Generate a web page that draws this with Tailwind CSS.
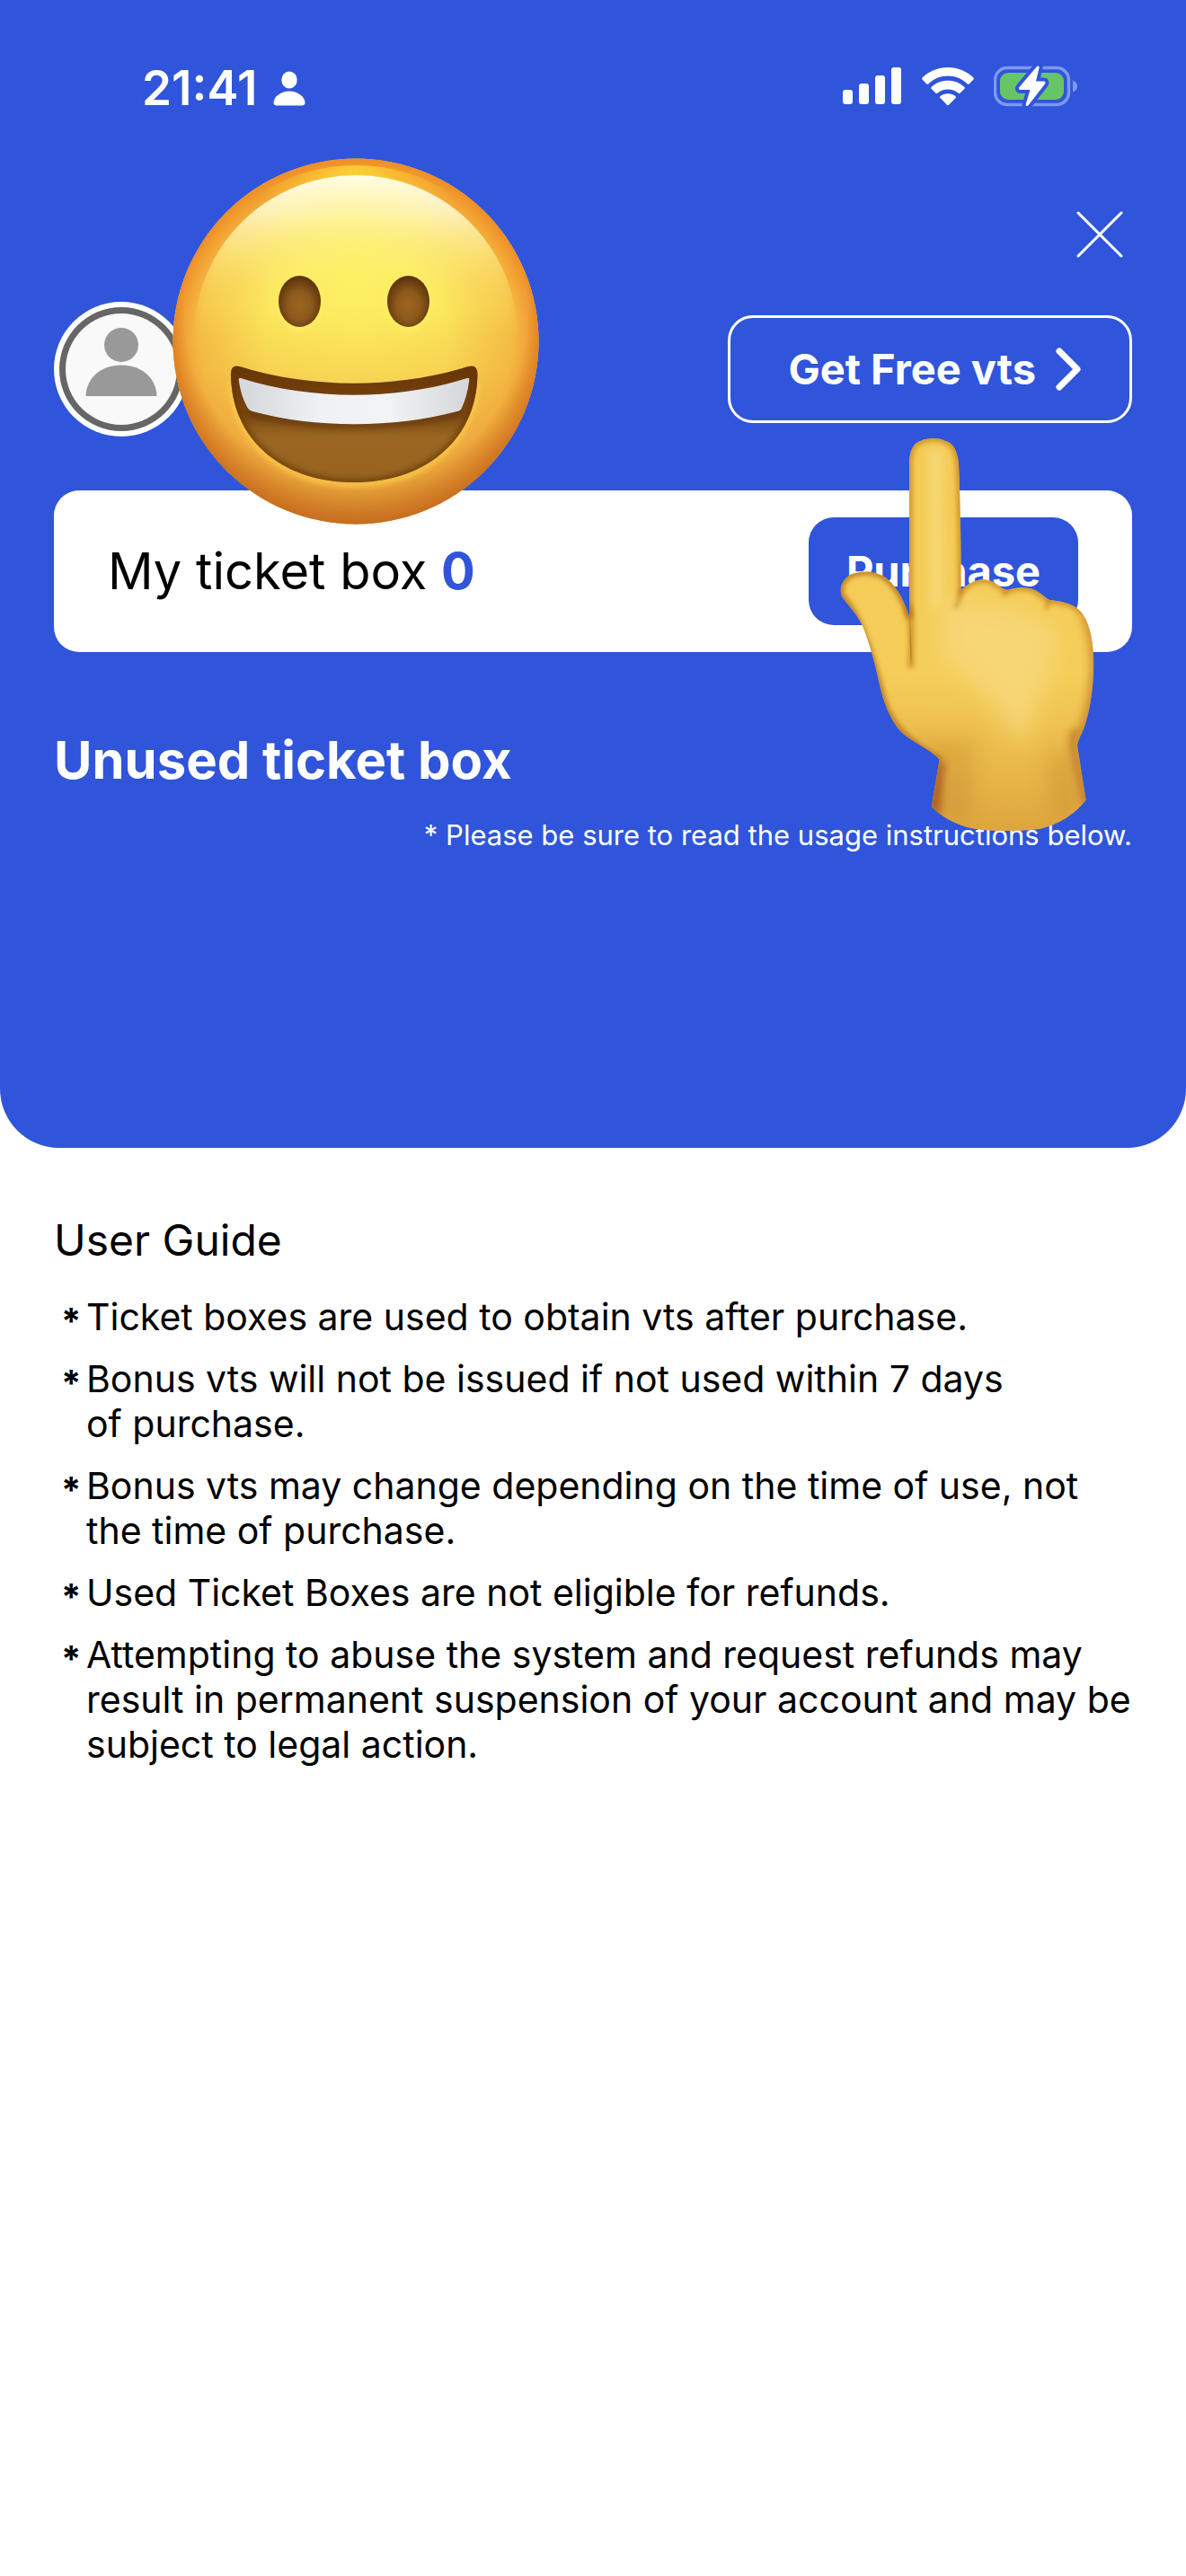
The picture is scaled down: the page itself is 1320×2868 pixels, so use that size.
<!DOCTYPE html>
<html lang="en">
<head>
  <meta charset="UTF-8" />
  <meta name="viewport" content="width=device-width, initial-scale=1" />
  <title>Ticket box</title>
  <script src="https://cdn.jsdelivr.net/npm/@tailwindcss/browser@4"></script>
</head>
<body class="bg-white text-black font-['Inter','Liberation_Sans',sans-serif] min-h-screen">

  <header class="relative bg-[#3055da] text-white rounded-b-[66px] pb-[330px]">

    <!-- Status bar -->
    <div class="flex items-center justify-between h-[192px] pl-[158px] pr-[120px]">
      <div class="flex items-center gap-[18px] pt-1">
        <span class="text-[53px] leading-[60px] font-semibold">21:41</span>
        <svg class="w-9 h-[39px]" viewBox="0 0 36 39" fill="currentColor" aria-hidden="true">
          <ellipse cx="18" cy="10" rx="8.7" ry="9.5" />
          <path d="M18 22.500C27 22.500 35.500 28.500 35.500 35.500C35.500 37.500 34 38.500 32 38.500H4C2 38.500 .5 37.500 .5 35.500C.5 28.500 9 22.500 18 22.500Z" />
        </svg>
      </div>
      <div class="flex items-center gap-[22px]">
        <svg class="w-[66px] h-[42px]" viewBox="0 0 66 42" fill="currentColor" aria-hidden="true">
          <rect x="0" y="25" width="11" height="16" rx="3" />
          <rect x="18" y="18" width="11" height="23" rx="3" />
          <rect x="36" y="9" width="11" height="32" rx="3" />
          <rect x="54" y="0" width="11" height="41" rx="3" />
        </svg>
        <svg class="w-[58px] h-[43px]" viewBox="0 0 58 43" fill="currentColor" aria-hidden="true">
          <path d="M29 0C40 0 50 4.300 57.200 11.300C58.100 12.200 58.100 13 57.300 13.800L52.800 18.200C52.100 18.900 51.300 18.900 50.500 18.200C44.700 12.700 37.200 9.600 29 9.600S13.300 12.700 7.500 18.200C6.700 18.900 5.900 18.900 5.200 18.200L.7 13.800C-.1 13-.1 12.200.8 11.300C8 4.300 18 0 29 0Z" />
          <path d="M29 14.800C36 14.800 42.400 17.400 47.200 21.800C48 22.600 48 23.400 47.300 24.100L42.700 28.500C42 29.200 41.200 29.200 40.400 28.500C37.300 25.900 33.300 24.400 29 24.400S20.700 25.900 17.600 28.500C16.800 29.200 16 29.200 15.300 28.500L10.700 24.100C10 23.400 10 22.600 10.800 21.800C15.600 17.400 22 14.800 29 14.800Z" />
          <path d="M29 29.300C32.200 29.300 35 30.300 37.300 32.100C38.100 32.800 38.100 33.600 37.400 34.300L30.300 41.500C29.400 42.400 28.600 42.400 27.700 41.500L20.600 34.300C19.900 33.600 19.900 32.800 20.700 32.100C23 30.300 25.800 29.300 29 29.300Z" />
        </svg>
        <svg class="w-[94px] h-[46px]" viewBox="0 0 94 46" aria-hidden="true">
          <rect x="1.500" y="2.500" width="82" height="41" rx="13.500" fill="none" stroke="#7f98f0" stroke-width="3.500" />
          <path d="M88 16.500C91 17.500 93 20 93 23S91 28.500 88 29.500Z" fill="#7f98f0" />
          <rect x="7" y="8" width="71" height="30" rx="9" fill="#68c566" />
          <path d="M48 1C49.500-.2 51 .8 50.500 2.700L47 17.500H55.500C57.500 17.500 58 19 57 20.500L38.500 44.200C37 45.700 35.200 44.500 35.800 42.700L40.500 27H30C28 27 27.500 25.500 28.500 24Z" fill="#fff" stroke="#3055da" stroke-width="8" stroke-linejoin="round" paint-order="stroke" />
        </svg>
      </div>
    </div>

    <div class="px-[60px]">
      <!-- Close -->
      <div class="flex justify-end">
        <button type="button" aria-label="Close" class="w-[72px] h-[138px] flex items-center justify-center">
          <svg class="w-[52px] h-[52px]" viewBox="0 0 52 52" fill="none" stroke="currentColor" stroke-width="3" stroke-linecap="round" aria-hidden="true">
            <path d="M2 2L50 50M50 2L2 50" />
          </svg>
        </button>
      </div>

      <!-- Profile and free vts -->
      <div class="relative flex items-center justify-between pt-[6px]">
        <svg class="w-[150px] h-[150px]" viewBox="0 0 150 150" role="img" aria-label="Profile">
          <circle cx="75" cy="75" r="75" fill="#fff" />
          <circle cx="75" cy="75" r="69" fill="#666" />
          <circle cx="75" cy="75" r="62" fill="#f9f9f9" />
          <circle cx="75" cy="48" r="19" fill="#999" />
          <path d="M35.500 105C36 85 52 70.500 75 70.500S114 85 114.500 105Z" fill="#999" />
        </svg>
        <button type="button" class="w-[450px] h-[120px] flex items-center justify-end gap-[22px] pr-[54px] border-3 border-white rounded-[28px] text-[47px] leading-[60px] font-bold whitespace-nowrap">
          Get Free vts
          <svg class="w-[28px] h-[50px]" viewBox="0 0 28 50" fill="none" stroke="currentColor" stroke-width="7" stroke-linecap="round" stroke-linejoin="round" aria-hidden="true">
            <path d="M4 5L24 25L4 45" />
          </svg>
        </button>

        <!-- Grinning face sticker -->
        <svg class="absolute left-[132px] top-[-154px] w-[408px] h-[408px] z-10" viewBox="0 0 408 408" role="img" aria-label="Grinning face">
          <defs>
            <linearGradient id="face-base" x1="0" y1="0" x2="0" y2="1">
              <stop offset="0" stop-color="#fcc12f" />
              <stop offset=".08" stop-color="#fbd040" />
              <stop offset=".4" stop-color="#fae45a" />
              <stop offset=".58" stop-color="#f7d452" />
              <stop offset=".8" stop-color="#efb545" />
              <stop offset="1" stop-color="#e0a03a" />
            </linearGradient>
            <radialGradient id="face-edge">
              <stop offset=".5" stop-color="#f19a30" stop-opacity="0" />
              <stop offset=".85" stop-color="#f09c34" stop-opacity=".5" />
              <stop offset="1" stop-color="#ee8a26" stop-opacity=".95" />
            </radialGradient>
            <radialGradient id="face-shade" gradientUnits="userSpaceOnUse" cx="204" cy="170" r="245">
              <stop offset=".78" stop-color="#b2601c" stop-opacity="0" />
              <stop offset="1" stop-color="#b2601c" stop-opacity=".8" />
            </radialGradient>
            <radialGradient id="face-top" gradientUnits="userSpaceOnUse" cx="204" cy="14" r="110">
              <stop offset="0" stop-color="#ffd535" stop-opacity=".85" />
              <stop offset="1" stop-color="#ffd535" stop-opacity="0" />
            </radialGradient>
            <linearGradient id="face-shine" gradientUnits="userSpaceOnUse" x1="0" y1="19" x2="0" y2="200">
              <stop offset="0" stop-color="#fffdea" />
              <stop offset=".22" stop-color="#fffbd0" stop-opacity=".85" />
              <stop offset=".5" stop-color="#fff994" stop-opacity=".55" />
              <stop offset=".75" stop-color="#fff478" stop-opacity=".22" />
              <stop offset="1" stop-color="#fff45c" stop-opacity="0" />
            </linearGradient>
            <radialGradient id="face-glow" gradientUnits="userSpaceOnUse" cx="204" cy="140" r="130">
              <stop offset="0" stop-color="#fff566" stop-opacity=".6" />
              <stop offset="1" stop-color="#fff566" stop-opacity="0" />
            </radialGradient>
            <radialGradient id="face-eye" cx=".5" cy=".58" r=".55">
              <stop offset="0" stop-color="#9a6520" />
              <stop offset=".5" stop-color="#8d5a1c" />
              <stop offset="1" stop-color="#5f340c" />
            </radialGradient>
            <linearGradient id="face-mouth" x1="0" y1="0" x2="0" y2="1">
              <stop offset="0" stop-color="#673405" />
              <stop offset=".4" stop-color="#7a4812" />
              <stop offset=".62" stop-color="#9a6722" />
              <stop offset="1" stop-color="#976421" />
            </linearGradient>
            <linearGradient id="face-teeth" x1="0" y1="0" x2="1" y2="0">
              <stop offset="0" stop-color="#d3d6da" />
              <stop offset=".35" stop-color="#eff1f4" />
              <stop offset=".65" stop-color="#f2f3f5" />
              <stop offset="1" stop-color="#d5d6d8" />
            </linearGradient>
            <clipPath id="mouth-clip">
              <path d="M75 232C155 257 249 257 329 232Q340 229 339.500 242C338 313 283 361 202 361S66 313 65 242Q64 229 75 232Z" />
            </clipPath>
            <filter id="soft" filterUnits="userSpaceOnUse" x="0" y="0" width="408" height="408"><feGaussianBlur stdDeviation="3" /></filter>
          </defs>
          <circle cx="204" cy="204" r="203.500" fill="url(#face-base)" />
          <circle cx="204" cy="204" r="203.500" fill="url(#face-edge)" />
          <circle cx="204" cy="204" r="203.500" fill="url(#face-shade)" />
          <circle cx="204" cy="204" r="196" fill="url(#face-top)" />
          <circle cx="204" cy="199" r="180" fill="url(#face-shine)" />
          <circle cx="204" cy="140" r="130" fill="url(#face-glow)" />
          <!-- eyes -->
          <g fill="#fff26a" opacity=".8" filter="url(#soft)">
            <ellipse cx="141.500" cy="163" rx="24" ry="29" />
            <ellipse cx="262.500" cy="163" rx="24" ry="29" />
          </g>
          <ellipse cx="141.500" cy="159.500" rx="23.500" ry="28.500" fill="url(#face-eye)" />
          <ellipse cx="262.500" cy="159.500" rx="23.500" ry="28.500" fill="url(#face-eye)" />
          <!-- mouth -->
          <path d="M66 250C69 315 123 363 202 363S335 315 338 250" fill="none" stroke="#fcd04e" stroke-width="5" filter="url(#soft)" />
          <path d="M75 232C155 257 249 257 329 232Q340 229 339.500 242C338 313 283 361 202 361S66 313 65 242Q64 229 75 232Z" fill="url(#face-mouth)" />
          <g clip-path="url(#mouth-clip)">
            <path d="M65 242C66 313 121 361 202 361S338 313 339.500 242" fill="none" stroke="#653506" stroke-width="7" opacity=".75" filter="url(#soft)" />
            <path d="M84 284C155 302 250 302 320 284" fill="none" stroke="#5b3007" stroke-width="6" opacity=".7" filter="url(#soft)" />
          </g>
          <path d="M76 245C155 270 249 270 328 245Q331 244 330 249Q328 265 322 278Q321 281 317 282C245 301 159 301 89 282Q85 281 83 277Q76 264 74 249Q73 244 76 245Z" fill="url(#face-teeth)" />
        </svg>
      </div>

      <!-- Ticket box card -->
      <div class="relative mt-[60px] h-[180px] flex items-center justify-between px-[60px] bg-white rounded-[28px]">
        <p class="text-[56px] leading-[72px] text-black">My ticket box <span class="font-bold text-[#3055da]">0</span></p>
        <button type="button" class="w-[300px] h-[120px] bg-[#3055da] rounded-[28px] text-[47px] leading-[60px] font-bold text-white">Purchase</button>

        <!-- Pointing hand sticker -->
        <svg class="absolute right-[38px] top-[-63px] w-[292px] h-[446px] z-10" viewBox="210 39 876 1338" role="img" aria-label="Pointing hand">
          <defs>
            <clipPath id="hand-clip">
              <path d="M456 650L456 130C458 95 470 68 495 62C515 52 555 50 575 62C605 68 617 100 621 140C626 250 629 400 629 562C650 540 680 524 708 526C745 528 760 560 785 560C810 552 835 550 860 556C895 565 910 590 925 594C960 598 1010 605 1035 640C1062 680 1072 745 1072 810C1071 890 1060 960 1040 1020C1030 1045 1020 1060 1017 1080L1046 1262C1010 1310 950 1345 895 1358C830 1368 720 1368 660 1356C610 1345 560 1315 530 1285L557 1127C530 1095 480 1075 440 1045C400 1010 375 950 360 890C345 820 325 740 300 680C275 630 245 605 231 582C220 555 232 525 262 508C300 494 345 496 378 520C420 555 440 600 456 650Z" />
            </clipPath>
            <linearGradient id="hand-base" x1="0" y1="0" x2="0" y2="1">
              <stop offset="0" stop-color="#f4ca55" />
              <stop offset=".6" stop-color="#f5cd58" />
              <stop offset=".8" stop-color="#ebbc4c" />
              <stop offset="1" stop-color="#dda53d" />
            </linearGradient>
            <filter id="blur-8" filterUnits="userSpaceOnUse" x="100" y="-60" width="1100" height="1540"><feGaussianBlur stdDeviation="8" /></filter>
            <filter id="blur-14" filterUnits="userSpaceOnUse" x="100" y="-60" width="1100" height="1540"><feGaussianBlur stdDeviation="14" /></filter>
            <filter id="blur-36" filterUnits="userSpaceOnUse" x="100" y="-60" width="1100" height="1540"><feGaussianBlur stdDeviation="36" /></filter>
          </defs>
          <g clip-path="url(#hand-clip)">
            <rect x="210" y="39" width="876" height="1338" fill="url(#hand-base)" />
            <!-- palm and finger light -->
            <path d="M560 600C760 590 900 640 950 700C960 780 900 900 830 1080C760 940 640 850 560 780Z" fill="#f6d675" filter="url(#blur-36)" />
            <path d="M545 90L548 620" stroke="#f6d772" stroke-width="50" fill="none" filter="url(#blur-14)" />
            <!-- soft shading under the palm and wrist -->
            <path d="M400 960C470 1060 560 1090 680 1060L660 1130L540 1140Z" fill="#d39b35" opacity=".75" filter="url(#blur-36)" />
            <path d="M550 1120L515 1290L560 1320L575 1140Z" fill="#9c4c1c" opacity=".85" filter="url(#blur-14)" />
            <path d="M590 1130L570 1330L640 1350L660 1150Z" fill="#c98a34" opacity=".6" filter="url(#blur-36)" />
            <path d="M1010 1030C995 1080 1014 1120 1050 1280" stroke="#a9581f" stroke-width="30" fill="none" opacity=".6" filter="url(#blur-14)" />
            <path d="M1045 640C1100 760 1080 940 1025 1060" stroke="#c07a25" stroke-width="36" fill="none" opacity=".75" filter="url(#blur-14)" />
            <path d="M960 1100L980 1320" stroke="#c98f30" stroke-width="70" fill="none" opacity=".6" filter="url(#blur-36)" />
            <!-- outline shading -->
            <path d="M456 660L456 130C458 95 470 68 495 62C515 52 555 50 575 62C605 68 617 100 621 140C626 250 629 400 629 562C650 540 680 524 708 526C745 528 760 560 785 560C810 552 835 550 860 556C895 565 910 590 925 594C960 598 1010 605 1035 640" fill="none" stroke="#c98a25" stroke-width="22" opacity=".8" filter="url(#blur-8)" />
            <path d="M456 650C440 600 420 555 378 520C345 496 300 494 262 508C232 525 220 555 231 582C290 640 330 780 360 890C380 1000 440 1060 557 1127" stroke="#b06a1e" stroke-width="22" fill="none" opacity=".75" filter="url(#blur-8)" />
            <!-- creases -->
            <path d="M458 610C466 700 462 760 461 820" stroke="#c07e24" stroke-width="20" fill="none" opacity=".65" filter="url(#blur-8)" />
            <path d="M629 555C628 580 622 600 610 620M785 560C778 568 774 574 770 582M925 594C918 604 915 612 912 625" stroke="#b4701d" stroke-width="14" fill="none" opacity=".5" filter="url(#blur-8)" />
          </g>
          <path d="M456 640C459 700 457 760 462 815C466 770 462 700 456 640Z" fill="#a9601a" opacity=".6" />
        </svg>
      </div>

      <h1 class="mt-[84px] text-[58px] leading-[72px] font-bold">Unused ticket box</h1>
      <p class="mt-[30px] text-right text-[31px] leading-[36px]">* Please be sure to read the usage instructions below.</p>
    </div>
  </header>

  <!-- User guide -->
  <main class="px-[60px] pt-[73px]">
    <h2 class="text-[48px] leading-[60px]">User Guide</h2>
    <ul class="mt-[30px] flex flex-col gap-[19px] text-[41px] leading-[50px]">
      <li class="flex items-start"><span class="w-9 h-[50px] shrink-0 pl-2 text-[40px] leading-[60px] font-bold">*</span><span>Ticket boxes are used to obtain vts after purchase.</span></li>
      <li class="flex items-start"><span class="w-9 h-[50px] shrink-0 pl-2 text-[40px] leading-[60px] font-bold">*</span><span>Bonus vts will not be issued if not used within 7 days<br />of purchase.</span></li>
      <li class="flex items-start"><span class="w-9 h-[50px] shrink-0 pl-2 text-[40px] leading-[60px] font-bold">*</span><span>Bonus vts may change depending on the time of use, not<br />the time of purchase.</span></li>
      <li class="flex items-start"><span class="w-9 h-[50px] shrink-0 pl-2 text-[40px] leading-[60px] font-bold">*</span><span>Used Ticket Boxes are not eligible for refunds.</span></li>
      <li class="flex items-start"><span class="w-9 h-[50px] shrink-0 pl-2 text-[40px] leading-[60px] font-bold">*</span><span>Attempting to abuse the system and request refunds may<br />result in permanent suspension of your account and may be<br />subject to legal action.</span></li>
    </ul>
  </main>

</body>
</html>
